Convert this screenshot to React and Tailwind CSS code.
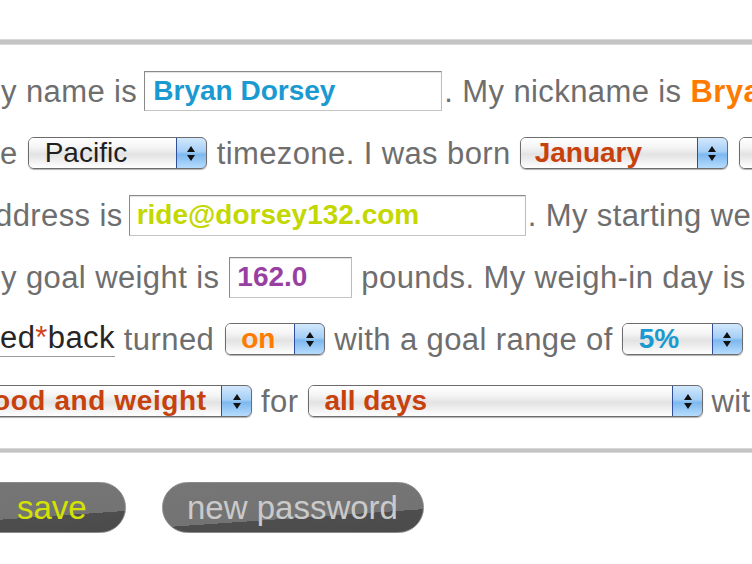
import React from 'react';

const font = "font-['Liberation_Sans',Arial,Helvetica,sans-serif]";

function Arrows() {
  return (
    <div className="-my-px -mr-px flex w-[31px] shrink-0 flex-col items-center justify-center gap-[3px] rounded-r-[6px] border border-[#2f4e9e] bg-[linear-gradient(to_bottom,#d2e8fd_0%,#a6cff6_45%,#7db8ef_55%,#b6dcfd_100%)]">
      <div className="h-0 w-0 border-x-[4px] border-b-[6px] border-x-transparent border-b-[#111]" />
      <div className="h-0 w-0 border-x-[4px] border-t-[6px] border-x-transparent border-t-[#111]" />
    </div>
  );
}

function Select({ box, text, children }) {
  return (
    <div className={`flex h-[32px] shrink-0 overflow-hidden rounded-[6px] border border-[#6c6c6c] shadow-[0_1px_1px_rgba(0,0,0,0.3)] ${box}`}>
      <div className={`flex flex-1 items-center overflow-hidden whitespace-nowrap bg-[linear-gradient(to_bottom,#ffffff_0%,#f5f5f5_30%,#e3e3e3_55%,#f2f2f2_80%,#ffffff_100%)] text-[28px] leading-none ${text}`}>
        {children}
      </div>
      <Arrows />
    </div>
  );
}

function Field({ box, text, children }) {
  return (
    <div className={`flex shrink-0 items-center border border-[#8a8a8a] border-b-[#c4c4c4] border-r-[#bdbdbd] bg-white pl-[7px] text-[28px] font-bold leading-none shadow-[inset_0_1px_1px_rgba(0,0,0,0.12)] ${box} ${text}`}>
      {children}
    </div>
  );
}

function Row({ children }) {
  return <div className="flex h-[62px] items-center whitespace-nowrap">{children}</div>;
}

function PillButton({ box, text, children }) {
  return (
    <button className={`flex h-[51px] shrink-0 items-center rounded-full border border-[#8a8a8a] bg-[linear-gradient(176deg,#767676_0%,#737373_66%,#4e4e4e_66%,#4b4b4b_100%)] text-[33px] leading-none ${box} ${text}`}>
      {children}
    </button>
  );
}

export default function App() {
  return (
    <div className={`h-[564px] w-[752px] overflow-hidden bg-white text-[31px] leading-none tracking-[0.4px] text-[#6e6e6e] ${font}`}>
      <div className="mt-[39px] h-[6px] border-y border-y-[#d8d8d8] bg-[#c4c4c4]" />

      <div className="mt-[15px]">
        <Row>
          <span className="ml-[1px]">y name is</span>
          <Field box="ml-[7px] h-[40px] w-[298px] pl-[8px] tracking-normal" text="text-[#1a9ad0]">Bryan Dorsey</Field>
          <span className="ml-[2px]">. My nickname is</span>
          <span className="ml-[9px] font-bold text-[#ff7b00]">Bryan</span>
        </Row>

        <Row>
          <span>e</span>
          <Select box="ml-[10px] w-[179px] tracking-normal" text="pl-[16px] text-[#1f1f1f]">Pacific</Select>
          <span className="ml-[10px]">timezone. I was born</span>
          <Select box="ml-[9px] w-[208px] tracking-normal" text="pl-[14px] font-bold text-[#c7410d]">January</Select>
          <Select box="ml-[11px] w-[130px] tracking-normal" text="pl-[24px] font-bold text-[#c7410d]">1</Select>
        </Row>

        <Row>
          <span className="-ml-[5px]">ddress is</span>
          <Field box="ml-[6px] h-[41px] w-[397px] tracking-normal" text="text-[#c3d700]">ride@dorsey132.com</Field>
          <span className="ml-[2px]">. My starting weight is</span>
        </Row>

        <Row>
          <span className="ml-[1px]">y goal weight is</span>
          <Field box="ml-[10px] h-[41px] w-[123px] tracking-normal" text="text-[#983fa2]">162.0</Field>
          <span className="ml-[9px]">pounds. My weigh-in day is</span>
        </Row>

        <Row>
          <span className="border-b border-[#9a9a9a] pb-[3px] text-[#262626]">
            ed<span className="text-[#d0461a]">*</span>back
          </span>
          <span className="ml-[9px]">turned</span>
          <Select box="ml-[11px] w-[100px] tracking-normal" text="pl-[15px] font-bold text-[#ff7b00]">on</Select>
          <span className="ml-[9px]">with a goal range of</span>
          <Select box="ml-[9px] w-[121px] tracking-normal" text="pl-[16px] font-bold text-[#1a9ad0]">5%</Select>
        </Row>

        <Row>
          <Select box="-ml-[30px] w-[282px] tracking-[0.6px]" text="pl-[12px] font-bold text-[#c7410d]">food and weight</Select>
          <span className="ml-[9px]">for</span>
          <Select box="ml-[10px] w-[395px] tracking-normal" text="pl-[15px] font-bold text-[#c7410d]">all days</Select>
          <span className="ml-[8px]">with</span>
        </Row>
      </div>

      <div className="mt-[16px] h-[5px] border-y border-y-[#d8d8d8] bg-[#c4c4c4]" />

      <div className="mt-[29px] flex items-center tracking-normal">
        <PillButton box="-ml-[60px] w-[186px] pl-[76px]" text="text-[#d4e200]">save</PillButton>
        <PillButton box="ml-[36px] w-[262px] pl-[24px]" text="text-[#cacaca]">new password</PillButton>
      </div>
    </div>
  );
}
